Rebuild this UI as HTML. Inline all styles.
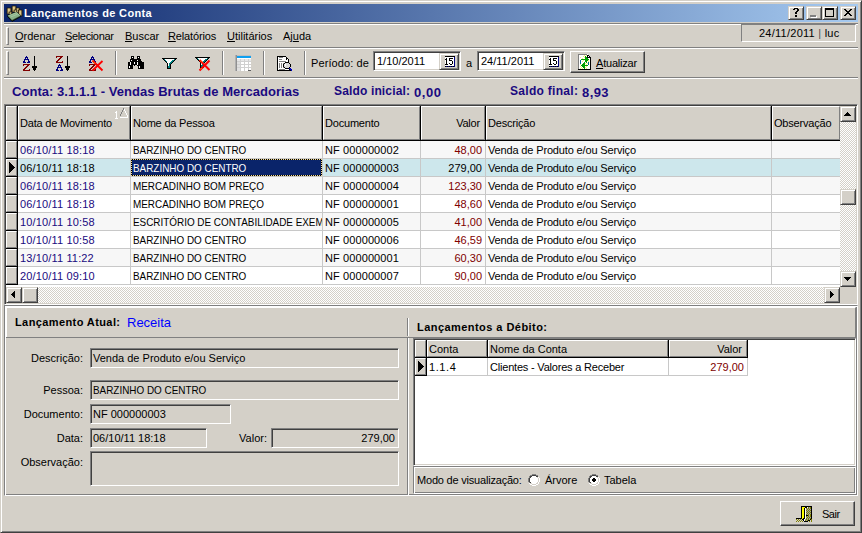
<!DOCTYPE html>
<html><head><meta charset="utf-8"><style>
html,body{margin:0;padding:0;}
body{width:862px;height:533px;position:relative;overflow:hidden;background:#d4d0c8;font-family:'Liberation Sans',sans-serif;font-size:11px;}
.t{position:absolute;white-space:nowrap;line-height:13px;font-size:11px;font-family:'Liberation Sans',sans-serif;}
u{text-decoration:underline;text-underline-offset:1px;}
</style></head><body>
<div style="position:absolute;left:0px;top:0px;width:862px;height:533px;box-sizing:border-box;background:#d4d0c8;border:1px solid;border-color:#d4d0c8 #404040 #404040 #d4d0c8;box-shadow:inset 1px 1px #ffffff,inset -1px -1px #808080;"></div>
<div style="position:absolute;left:4px;top:4px;width:854px;height:18px;background:linear-gradient(to right,#0a246a,#a6caf0);"></div>
<svg style="position:absolute;left:6px;top:5px" width="17" height="17" viewBox="0 0 17 17">
<defs><linearGradient id="cg" x1="0" x2="1"><stop offset="0" stop-color="#8a7040"/><stop offset="0.45" stop-color="#f0dc98"/><stop offset="1" stop-color="#9a8048"/></linearGradient></defs>
<g stroke="#1a1408" stroke-width="0.7">
<rect x="1" y="3" width="4" height="6" fill="url(#cg)"/>
<rect x="6" y="1" width="4" height="6" fill="url(#cg)"/>
<rect x="10" y="3" width="3.5" height="5" fill="url(#cg)"/>
<rect x="12.5" y="5" width="3.5" height="6" fill="url(#cg)"/>
<rect x="3" y="7" width="3" height="2.5" fill="url(#cg)"/>
<rect x="8" y="5" width="3" height="2.5" fill="url(#cg)"/>
</g>
<path d="M1.6 10.4 L10.4 7 L14.7 10.4 L14.7 11.6 L6 16.4 L1.6 11.6 Z" fill="#304830" stroke="#000" stroke-width="0.8" stroke-linejoin="round"/>
<path d="M1.6 10.4 L10.4 7 L14.7 10.4 L6 15 Z" fill="#88b088"/>
<path d="M3.2 10.6 L10.4 7.9 L13.3 10.3 M4.6 12 L11.2 9.3" fill="none" stroke="#b0d0a8" stroke-width="0.7"/>
</svg>
<div class="t" style="left:24px;top:7px;color:#fff;font-weight:bold;letter-spacing:0.35px;">Lançamentos de Conta</div>
<div style="position:absolute;left:788px;top:6px;width:16px;height:14px;box-sizing:border-box;background:#d4d0c8;border:1px solid;border-color:#d4d0c8 #404040 #404040 #d4d0c8;box-shadow:inset 1px 1px #ffffff,inset -1px -1px #808080;"></div>
<svg style="position:absolute;left:793px;top:8px" width="6" height="9" viewBox="0 0 6 9" shape-rendering="crispEdges"><rect x="1" y="0" width="4" height="1" fill="#000"/><rect x="0" y="1" width="2" height="1" fill="#000"/><rect x="4" y="1" width="2" height="1" fill="#000"/><rect x="4" y="2" width="2" height="1" fill="#000"/><rect x="3" y="3" width="2" height="1" fill="#000"/><rect x="2" y="4" width="2" height="1" fill="#000"/><rect x="2" y="5" width="2" height="1" fill="#000"/><rect x="2" y="7" width="2" height="1" fill="#000"/><rect x="2" y="8" width="2" height="1" fill="#000"/></svg>
<div style="position:absolute;left:806px;top:6px;width:16px;height:14px;box-sizing:border-box;background:#d4d0c8;border:1px solid;border-color:#d4d0c8 #404040 #404040 #d4d0c8;box-shadow:inset 1px 1px #ffffff,inset -1px -1px #808080;"></div>
<svg style="position:absolute;left:810px;top:15px" width="7" height="3" viewBox="0 0 7 3" shape-rendering="crispEdges"><rect x="0" y="0" width="6" height="1" fill="#808080"/><rect x="0" y="1" width="6" height="1" fill="#808080"/><rect x="6" y="1" width="1" height="1" fill="#fff"/><rect x="1" y="2" width="6" height="1" fill="#fff"/></svg>
<div style="position:absolute;left:822px;top:6px;width:16px;height:14px;box-sizing:border-box;background:#d4d0c8;border:1px solid;border-color:#d4d0c8 #404040 #404040 #d4d0c8;box-shadow:inset 1px 1px #ffffff,inset -1px -1px #808080;"></div>
<svg style="position:absolute;left:825px;top:8px" width="9" height="9" viewBox="0 0 9 9" shape-rendering="crispEdges"><rect x="0" y="0" width="9" height="1" fill="#000"/><rect x="0" y="1" width="9" height="1" fill="#000"/><rect x="0" y="2" width="1" height="1" fill="#000"/><rect x="8" y="2" width="1" height="1" fill="#000"/><rect x="0" y="3" width="1" height="1" fill="#000"/><rect x="8" y="3" width="1" height="1" fill="#000"/><rect x="0" y="4" width="1" height="1" fill="#000"/><rect x="8" y="4" width="1" height="1" fill="#000"/><rect x="0" y="5" width="1" height="1" fill="#000"/><rect x="8" y="5" width="1" height="1" fill="#000"/><rect x="0" y="6" width="1" height="1" fill="#000"/><rect x="8" y="6" width="1" height="1" fill="#000"/><rect x="0" y="7" width="1" height="1" fill="#000"/><rect x="8" y="7" width="1" height="1" fill="#000"/><rect x="0" y="8" width="9" height="1" fill="#000"/></svg>
<div style="position:absolute;left:840px;top:6px;width:16px;height:14px;box-sizing:border-box;background:#d4d0c8;border:1px solid;border-color:#d4d0c8 #404040 #404040 #d4d0c8;box-shadow:inset 1px 1px #ffffff,inset -1px -1px #808080;"></div>
<svg style="position:absolute;left:844px;top:9px" width="8" height="7" viewBox="0 0 8 7" shape-rendering="crispEdges"><rect x="0" y="0" width="2" height="1" fill="#000"/><rect x="6" y="0" width="2" height="1" fill="#000"/><rect x="1" y="1" width="2" height="1" fill="#000"/><rect x="5" y="1" width="2" height="1" fill="#000"/><rect x="2" y="2" width="4" height="1" fill="#000"/><rect x="3" y="3" width="2" height="1" fill="#000"/><rect x="2" y="4" width="4" height="1" fill="#000"/><rect x="1" y="5" width="2" height="1" fill="#000"/><rect x="5" y="5" width="2" height="1" fill="#000"/><rect x="0" y="6" width="2" height="1" fill="#000"/><rect x="6" y="6" width="2" height="1" fill="#000"/></svg>
<div style="position:absolute;left:4px;top:23px;width:854px;height:1px;background:#808080"></div>
<div style="position:absolute;left:4px;top:24px;width:854px;height:1px;background:#ffffff"></div>
<div style="position:absolute;left:6px;top:27px;width:3px;height:18px;box-sizing:border-box;border:1px solid;border-color:#ffffff #808080 #808080 #ffffff;"></div>
<div class="t" style="left:15px;top:30px;color:#000;"><u>O</u>rdenar</div>
<div class="t" style="left:65px;top:30px;color:#000;letter-spacing:-0.35px;"><u>S</u>elecionar</div>
<div class="t" style="left:125px;top:30px;color:#000;"><u>B</u>uscar</div>
<div class="t" style="left:168px;top:30px;color:#000;letter-spacing:-0.15px;"><u>R</u>elatórios</div>
<div class="t" style="left:227px;top:30px;color:#000;"><u>U</u>tilitários</div>
<div class="t" style="left:283px;top:30px;color:#000;">Aj<u>u</u>da</div>
<div style="position:absolute;left:741px;top:24px;width:115px;height:18px;box-sizing:border-box;background:#d4d0c8;border:1px solid;border-color:#808080 #ffffff #ffffff #808080;"></div>
<div class="t" style="left:759px;top:27px;color:#000;letter-spacing:0.25px;">24/11/2011 <span style="color:#505050">|</span> luc</div>
<div style="position:absolute;left:4px;top:47px;width:854px;height:1px;background:#808080"></div>
<div style="position:absolute;left:4px;top:48px;width:854px;height:1px;background:#ffffff"></div>
<div style="position:absolute;left:6px;top:51px;width:3px;height:24px;box-sizing:border-box;border:1px solid;border-color:#ffffff #808080 #808080 #ffffff;"></div>
<div style="position:absolute;left:4px;top:77px;width:854px;height:1px;background:#808080"></div>
<div style="position:absolute;left:4px;top:78px;width:854px;height:1px;background:#ffffff"></div>
<div style="position:absolute;left:115px;top:51px;width:1px;height:24px;background:#808080"></div>
<div style="position:absolute;left:116px;top:51px;width:1px;height:24px;background:#ffffff"></div>
<div style="position:absolute;left:222px;top:51px;width:1px;height:24px;background:#808080"></div>
<div style="position:absolute;left:223px;top:51px;width:1px;height:24px;background:#ffffff"></div>
<div style="position:absolute;left:263px;top:51px;width:1px;height:24px;background:#808080"></div>
<div style="position:absolute;left:264px;top:51px;width:1px;height:24px;background:#ffffff"></div>
<div style="position:absolute;left:304px;top:51px;width:1px;height:24px;background:#808080"></div>
<div style="position:absolute;left:305px;top:51px;width:1px;height:24px;background:#ffffff"></div>
<svg style="position:absolute;left:23px;top:56px" width="14" height="15" viewBox="0 0 14 15" shape-rendering="crispEdges"><rect x="3" y="0" width="1" height="1" fill="#000080"/><rect x="11" y="0" width="1" height="1" fill="#000"/><rect x="2" y="1" width="3" height="1" fill="#000080"/><rect x="11" y="1" width="1" height="1" fill="#000"/><rect x="2" y="2" width="1" height="1" fill="#000080"/><rect x="4" y="2" width="1" height="1" fill="#000080"/><rect x="11" y="2" width="1" height="1" fill="#000"/><rect x="1" y="3" width="5" height="1" fill="#000080"/><rect x="11" y="3" width="1" height="1" fill="#000"/><rect x="1" y="4" width="1" height="1" fill="#000080"/><rect x="5" y="4" width="1" height="1" fill="#000080"/><rect x="11" y="4" width="1" height="1" fill="#000"/><rect x="0" y="5" width="2" height="1" fill="#000080"/><rect x="5" y="5" width="2" height="1" fill="#000080"/><rect x="11" y="5" width="1" height="1" fill="#000"/><rect x="0" y="6" width="3" height="1" fill="#000080"/><rect x="4" y="6" width="3" height="1" fill="#000080"/><rect x="11" y="6" width="1" height="1" fill="#000"/><rect x="11" y="7" width="1" height="1" fill="#000"/><rect x="0" y="8" width="7" height="1" fill="#800000"/><rect x="11" y="8" width="1" height="1" fill="#000"/><rect x="0" y="9" width="1" height="1" fill="#800000"/><rect x="4" y="9" width="2" height="1" fill="#800000"/><rect x="11" y="9" width="1" height="1" fill="#000"/><rect x="3" y="10" width="2" height="1" fill="#800000"/><rect x="9" y="10" width="5" height="1" fill="#000"/><rect x="2" y="11" width="2" height="1" fill="#800000"/><rect x="9" y="11" width="5" height="1" fill="#000"/><rect x="1" y="12" width="2" height="1" fill="#800000"/><rect x="10" y="12" width="3" height="1" fill="#000"/><rect x="0" y="13" width="2" height="1" fill="#800000"/><rect x="6" y="13" width="1" height="1" fill="#800000"/><rect x="10" y="13" width="3" height="1" fill="#000"/><rect x="0" y="14" width="7" height="1" fill="#800000"/><rect x="11" y="14" width="1" height="1" fill="#000"/></svg>
<svg style="position:absolute;left:56px;top:56px" width="14" height="15" viewBox="0 0 14 15" shape-rendering="crispEdges"><rect x="0" y="0" width="7" height="1" fill="#800000"/><rect x="11" y="0" width="1" height="1" fill="#000"/><rect x="0" y="1" width="1" height="1" fill="#800000"/><rect x="4" y="1" width="2" height="1" fill="#800000"/><rect x="11" y="1" width="1" height="1" fill="#000"/><rect x="3" y="2" width="2" height="1" fill="#800000"/><rect x="11" y="2" width="1" height="1" fill="#000"/><rect x="2" y="3" width="2" height="1" fill="#800000"/><rect x="11" y="3" width="1" height="1" fill="#000"/><rect x="1" y="4" width="2" height="1" fill="#800000"/><rect x="11" y="4" width="1" height="1" fill="#000"/><rect x="0" y="5" width="2" height="1" fill="#800000"/><rect x="6" y="5" width="1" height="1" fill="#800000"/><rect x="11" y="5" width="1" height="1" fill="#000"/><rect x="0" y="6" width="7" height="1" fill="#800000"/><rect x="11" y="6" width="1" height="1" fill="#000"/><rect x="11" y="7" width="1" height="1" fill="#000"/><rect x="3" y="8" width="1" height="1" fill="#000080"/><rect x="11" y="8" width="1" height="1" fill="#000"/><rect x="2" y="9" width="3" height="1" fill="#000080"/><rect x="11" y="9" width="1" height="1" fill="#000"/><rect x="2" y="10" width="1" height="1" fill="#000080"/><rect x="4" y="10" width="1" height="1" fill="#000080"/><rect x="9" y="10" width="5" height="1" fill="#000"/><rect x="1" y="11" width="5" height="1" fill="#000080"/><rect x="9" y="11" width="5" height="1" fill="#000"/><rect x="1" y="12" width="1" height="1" fill="#000080"/><rect x="5" y="12" width="1" height="1" fill="#000080"/><rect x="10" y="12" width="3" height="1" fill="#000"/><rect x="0" y="13" width="2" height="1" fill="#000080"/><rect x="5" y="13" width="2" height="1" fill="#000080"/><rect x="10" y="13" width="3" height="1" fill="#000"/><rect x="0" y="14" width="3" height="1" fill="#000080"/><rect x="4" y="14" width="3" height="1" fill="#000080"/><rect x="11" y="14" width="1" height="1" fill="#000"/></svg>
<svg style="position:absolute;left:89px;top:56px" width="14" height="15" viewBox="0 0 14 15" shape-rendering="crispEdges"><rect x="3" y="0" width="1" height="1" fill="#000080"/><rect x="2" y="1" width="3" height="1" fill="#000080"/><rect x="2" y="2" width="1" height="1" fill="#000080"/><rect x="4" y="2" width="1" height="1" fill="#000080"/><rect x="1" y="3" width="5" height="1" fill="#000080"/><rect x="1" y="4" width="1" height="1" fill="#000080"/><rect x="5" y="4" width="1" height="1" fill="#000080"/><rect x="0" y="5" width="2" height="1" fill="#000080"/><rect x="5" y="5" width="2" height="1" fill="#000080"/><rect x="0" y="6" width="3" height="1" fill="#000080"/><rect x="4" y="6" width="3" height="1" fill="#000080"/><rect x="0" y="8" width="7" height="1" fill="#800000"/><rect x="0" y="9" width="1" height="1" fill="#800000"/><rect x="4" y="9" width="2" height="1" fill="#800000"/><rect x="3" y="10" width="2" height="1" fill="#800000"/><rect x="2" y="11" width="2" height="1" fill="#800000"/><rect x="1" y="12" width="2" height="1" fill="#800000"/><rect x="0" y="13" width="2" height="1" fill="#800000"/><rect x="6" y="13" width="1" height="1" fill="#800000"/><rect x="0" y="14" width="7" height="1" fill="#800000"/></svg>
<svg style="position:absolute;left:86px;top:54px" width="20" height="20" viewBox="0 0 20 20"><path d="M6.5 6.5 L16.5 16.5 M16.5 7 L6.5 16.5" stroke="#ff0000" stroke-width="1.8"/><path d="M7 7.5 L9 9.5" stroke="#ff9000" stroke-width="1"/></svg>
<svg style="position:absolute;left:128px;top:56px" width="16" height="13" viewBox="0 0 16 13" shape-rendering="crispEdges"><rect x="3" y="0" width="3" height="1" fill="#000"/><rect x="9" y="0" width="3" height="1" fill="#000"/><rect x="3" y="1" width="1" height="1" fill="#000"/><rect x="4" y="1" width="1" height="1" fill="#fff"/><rect x="5" y="1" width="1" height="1" fill="#000"/><rect x="9" y="1" width="1" height="1" fill="#000"/><rect x="10" y="1" width="1" height="1" fill="#fff"/><rect x="11" y="1" width="1" height="1" fill="#000"/><rect x="3" y="2" width="3" height="1" fill="#000"/><rect x="9" y="2" width="3" height="1" fill="#000"/><rect x="2" y="3" width="11" height="1" fill="#000"/><rect x="2" y="4" width="1" height="1" fill="#000"/><rect x="3" y="4" width="1" height="1" fill="#fff"/><rect x="4" y="4" width="5" height="1" fill="#000"/><rect x="9" y="4" width="1" height="1" fill="#fff"/><rect x="10" y="4" width="3" height="1" fill="#000"/><rect x="2" y="5" width="12" height="1" fill="#000"/><rect x="0" y="6" width="2" height="1" fill="#000"/><rect x="2" y="6" width="1" height="1" fill="#fff"/><rect x="3" y="6" width="3" height="1" fill="#000"/><rect x="6" y="6" width="1" height="1" fill="#fff"/><rect x="7" y="6" width="2" height="1" fill="#000"/><rect x="9" y="6" width="1" height="1" fill="#fff"/><rect x="10" y="6" width="6" height="1" fill="#000"/><rect x="0" y="7" width="2" height="1" fill="#000"/><rect x="2" y="7" width="1" height="1" fill="#fff"/><rect x="3" y="7" width="3" height="1" fill="#000"/><rect x="6" y="7" width="1" height="1" fill="#fff"/><rect x="7" y="7" width="2" height="1" fill="#000"/><rect x="9" y="7" width="1" height="1" fill="#fff"/><rect x="10" y="7" width="6" height="1" fill="#000"/><rect x="0" y="8" width="2" height="1" fill="#000"/><rect x="2" y="8" width="1" height="1" fill="#fff"/><rect x="3" y="8" width="6" height="1" fill="#000"/><rect x="9" y="8" width="1" height="1" fill="#fff"/><rect x="10" y="8" width="6" height="1" fill="#000"/><rect x="0" y="9" width="5" height="1" fill="#000"/><rect x="6" y="9" width="1" height="1" fill="#000"/><rect x="9" y="9" width="7" height="1" fill="#000"/><rect x="0" y="10" width="1" height="1" fill="#000"/><rect x="1" y="10" width="1" height="1" fill="#fff"/><rect x="2" y="10" width="3" height="1" fill="#000"/><rect x="10" y="10" width="1" height="1" fill="#000"/><rect x="11" y="10" width="1" height="1" fill="#fff"/><rect x="12" y="10" width="4" height="1" fill="#000"/><rect x="0" y="11" width="1" height="1" fill="#000"/><rect x="1" y="11" width="1" height="1" fill="#fff"/><rect x="2" y="11" width="3" height="1" fill="#000"/><rect x="10" y="11" width="1" height="1" fill="#000"/><rect x="11" y="11" width="1" height="1" fill="#fff"/><rect x="12" y="11" width="4" height="1" fill="#000"/><rect x="0" y="12" width="5" height="1" fill="#000"/><rect x="10" y="12" width="6" height="1" fill="#000"/></svg>
<svg style="position:absolute;left:162px;top:58px" width="15" height="11" viewBox="0 0 15 11" shape-rendering="crispEdges"><rect x="0" y="0" width="15" height="1" fill="#000"/><rect x="1" y="1" width="1" height="1" fill="#000"/><rect x="2" y="1" width="1" height="1" fill="#008080"/><rect x="3" y="1" width="9" height="1" fill="#fff"/><rect x="12" y="1" width="1" height="1" fill="#008080"/><rect x="13" y="1" width="1" height="1" fill="#000"/><rect x="2" y="2" width="1" height="1" fill="#000"/><rect x="3" y="2" width="1" height="1" fill="#008080"/><rect x="4" y="2" width="6" height="1" fill="#fff"/><rect x="10" y="2" width="2" height="1" fill="#008080"/><rect x="12" y="2" width="1" height="1" fill="#000"/><rect x="3" y="3" width="1" height="1" fill="#000"/><rect x="4" y="3" width="1" height="1" fill="#008080"/><rect x="5" y="3" width="4" height="1" fill="#fff"/><rect x="9" y="3" width="2" height="1" fill="#008080"/><rect x="11" y="3" width="1" height="1" fill="#000"/><rect x="4" y="4" width="1" height="1" fill="#000"/><rect x="5" y="4" width="3" height="1" fill="#fff"/><rect x="8" y="4" width="2" height="1" fill="#008080"/><rect x="10" y="4" width="1" height="1" fill="#000"/><rect x="5" y="5" width="1" height="1" fill="#000"/><rect x="6" y="5" width="1" height="1" fill="#fff"/><rect x="7" y="5" width="2" height="1" fill="#008080"/><rect x="9" y="5" width="1" height="1" fill="#000"/><rect x="5" y="6" width="1" height="1" fill="#000"/><rect x="6" y="6" width="1" height="1" fill="#fff"/><rect x="7" y="6" width="1" height="1" fill="#008080"/><rect x="8" y="6" width="1" height="1" fill="#000"/><rect x="5" y="7" width="1" height="1" fill="#000"/><rect x="6" y="7" width="1" height="1" fill="#fff"/><rect x="7" y="7" width="1" height="1" fill="#008080"/><rect x="8" y="7" width="1" height="1" fill="#000"/><rect x="5" y="8" width="1" height="1" fill="#000"/><rect x="6" y="8" width="2" height="1" fill="#008080"/><rect x="8" y="8" width="1" height="1" fill="#000"/><rect x="5" y="9" width="1" height="1" fill="#000"/><rect x="6" y="9" width="2" height="1" fill="#008080"/><rect x="8" y="9" width="1" height="1" fill="#000"/><rect x="5" y="10" width="4" height="1" fill="#000"/></svg>
<svg style="position:absolute;left:195px;top:57px" width="15" height="11" viewBox="0 0 15 11" shape-rendering="crispEdges"><rect x="0" y="0" width="15" height="1" fill="#000"/><rect x="1" y="1" width="1" height="1" fill="#000"/><rect x="2" y="1" width="1" height="1" fill="#008080"/><rect x="3" y="1" width="9" height="1" fill="#fff"/><rect x="12" y="1" width="1" height="1" fill="#008080"/><rect x="13" y="1" width="1" height="1" fill="#000"/><rect x="2" y="2" width="1" height="1" fill="#000"/><rect x="3" y="2" width="1" height="1" fill="#008080"/><rect x="4" y="2" width="6" height="1" fill="#fff"/><rect x="10" y="2" width="2" height="1" fill="#008080"/><rect x="12" y="2" width="1" height="1" fill="#000"/><rect x="3" y="3" width="1" height="1" fill="#000"/><rect x="4" y="3" width="1" height="1" fill="#008080"/><rect x="5" y="3" width="4" height="1" fill="#fff"/><rect x="9" y="3" width="2" height="1" fill="#008080"/><rect x="11" y="3" width="1" height="1" fill="#000"/><rect x="4" y="4" width="1" height="1" fill="#000"/><rect x="5" y="4" width="3" height="1" fill="#fff"/><rect x="8" y="4" width="2" height="1" fill="#008080"/><rect x="10" y="4" width="1" height="1" fill="#000"/><rect x="5" y="5" width="1" height="1" fill="#000"/><rect x="6" y="5" width="1" height="1" fill="#fff"/><rect x="7" y="5" width="2" height="1" fill="#008080"/><rect x="9" y="5" width="1" height="1" fill="#000"/><rect x="5" y="6" width="1" height="1" fill="#000"/><rect x="6" y="6" width="1" height="1" fill="#fff"/><rect x="7" y="6" width="1" height="1" fill="#008080"/><rect x="8" y="6" width="1" height="1" fill="#000"/><rect x="5" y="7" width="1" height="1" fill="#000"/><rect x="6" y="7" width="1" height="1" fill="#fff"/><rect x="7" y="7" width="1" height="1" fill="#008080"/><rect x="8" y="7" width="1" height="1" fill="#000"/><rect x="5" y="8" width="1" height="1" fill="#000"/><rect x="6" y="8" width="2" height="1" fill="#008080"/><rect x="8" y="8" width="1" height="1" fill="#000"/><rect x="5" y="9" width="1" height="1" fill="#000"/><rect x="6" y="9" width="2" height="1" fill="#008080"/><rect x="8" y="9" width="1" height="1" fill="#000"/><rect x="5" y="10" width="4" height="1" fill="#000"/></svg>
<svg style="position:absolute;left:195px;top:55px" width="18" height="18" viewBox="0 0 18 18"><path d="M4.5 5 L14.5 15 M14.5 5.5 L4.5 15.5" stroke="#ff0000" stroke-width="2"/><path d="M5 5.5 L7 7.5 M5.5 14.5 L7 13" stroke="#ff9000" stroke-width="0.8"/></svg>
<svg style="position:absolute;left:235px;top:55px" width="16" height="16" viewBox="0 0 16 16" shape-rendering="crispEdges"><rect x="0" y="0" width="16" height="16" fill="#fff"/><rect x="0" y="0" width="2" height="16" fill="#909090"/><rect x="0" y="0" width="1" height="16" fill="#b0b0b0"/><rect x="2" y="0" width="14" height="1" fill="#c0c0c0"/><rect x="2" y="1" width="14" height="2" fill="#10a0f0"/><rect x="2" y="4" width="14" height="2" fill="#e8e8e8"/><rect x="2" y="6" width="3" height="10" fill="#e0e0e0"/><path d="M2 6.5H16M2 9.5H16M2 12.5H16M5.5 4V16M9.5 4V16M13.5 4V16" stroke="#d0d0d0" stroke-width="1"/><rect x="13" y="15" width="3" height="1" fill="#606060"/></svg>
<svg style="position:absolute;left:277px;top:56px" width="16" height="15" viewBox="0 0 16 15" shape-rendering="crispEdges"><rect x="0" y="0" width="9" height="1" fill="#000"/><rect x="0" y="1" width="1" height="1" fill="#000"/><rect x="1" y="1" width="1" height="1" fill="#fff"/><rect x="2" y="1" width="4" height="1" fill="#808080"/><rect x="6" y="1" width="3" height="1" fill="#fff"/><rect x="9" y="1" width="1" height="1" fill="#000"/><rect x="0" y="2" width="1" height="1" fill="#000"/><rect x="1" y="2" width="8" height="1" fill="#fff"/><rect x="9" y="2" width="2" height="1" fill="#000"/><rect x="0" y="3" width="1" height="1" fill="#000"/><rect x="1" y="3" width="1" height="1" fill="#fff"/><rect x="2" y="3" width="3" height="1" fill="#808080"/><rect x="5" y="3" width="4" height="1" fill="#fff"/><rect x="9" y="3" width="1" height="1" fill="#000"/><rect x="10" y="3" width="1" height="1" fill="#fff"/><rect x="11" y="3" width="1" height="1" fill="#000"/><rect x="0" y="4" width="1" height="1" fill="#000"/><rect x="1" y="4" width="10" height="1" fill="#fff"/><rect x="11" y="4" width="1" height="1" fill="#000"/><rect x="0" y="5" width="1" height="1" fill="#000"/><rect x="1" y="5" width="1" height="1" fill="#fff"/><rect x="2" y="5" width="7" height="1" fill="#808080"/><rect x="9" y="5" width="2" height="1" fill="#fff"/><rect x="11" y="5" width="1" height="1" fill="#000"/><rect x="0" y="6" width="1" height="1" fill="#000"/><rect x="1" y="6" width="7" height="1" fill="#fff"/><rect x="8" y="6" width="4" height="1" fill="#000"/><rect x="0" y="7" width="1" height="1" fill="#000"/><rect x="1" y="7" width="1" height="1" fill="#fff"/><rect x="2" y="7" width="1" height="1" fill="#808080"/><rect x="3" y="7" width="1" height="1" fill="#fff"/><rect x="4" y="7" width="1" height="1" fill="#808080"/><rect x="5" y="7" width="1" height="1" fill="#fff"/><rect x="6" y="7" width="1" height="1" fill="#808080"/><rect x="7" y="7" width="1" height="1" fill="#000"/><rect x="8" y="7" width="4" height="1" fill="#d8d8d8"/><rect x="12" y="7" width="1" height="1" fill="#000"/><rect x="0" y="8" width="1" height="1" fill="#000"/><rect x="1" y="8" width="1" height="1" fill="#fff"/><rect x="2" y="8" width="1" height="1" fill="#808080"/><rect x="3" y="8" width="1" height="1" fill="#fff"/><rect x="4" y="8" width="1" height="1" fill="#808080"/><rect x="5" y="8" width="1" height="1" fill="#fff"/><rect x="6" y="8" width="1" height="1" fill="#000"/><rect x="7" y="8" width="1" height="1" fill="#d8d8d8"/><rect x="8" y="8" width="1" height="1" fill="#fff"/><rect x="9" y="8" width="4" height="1" fill="#d8d8d8"/><rect x="13" y="8" width="1" height="1" fill="#000"/><rect x="0" y="9" width="1" height="1" fill="#000"/><rect x="1" y="9" width="1" height="1" fill="#fff"/><rect x="2" y="9" width="1" height="1" fill="#808080"/><rect x="3" y="9" width="1" height="1" fill="#fff"/><rect x="4" y="9" width="1" height="1" fill="#808080"/><rect x="5" y="9" width="1" height="1" fill="#fff"/><rect x="6" y="9" width="1" height="1" fill="#000"/><rect x="7" y="9" width="1" height="1" fill="#d8d8d8"/><rect x="8" y="9" width="1" height="1" fill="#fff"/><rect x="9" y="9" width="4" height="1" fill="#d8d8d8"/><rect x="13" y="9" width="1" height="1" fill="#000"/><rect x="0" y="10" width="1" height="1" fill="#000"/><rect x="1" y="10" width="1" height="1" fill="#fff"/><rect x="2" y="10" width="1" height="1" fill="#808080"/><rect x="3" y="10" width="1" height="1" fill="#fff"/><rect x="4" y="10" width="1" height="1" fill="#808080"/><rect x="5" y="10" width="1" height="1" fill="#fff"/><rect x="6" y="10" width="1" height="1" fill="#000"/><rect x="7" y="10" width="6" height="1" fill="#d8d8d8"/><rect x="13" y="10" width="1" height="1" fill="#000"/><rect x="0" y="11" width="1" height="1" fill="#000"/><rect x="1" y="11" width="1" height="1" fill="#fff"/><rect x="2" y="11" width="1" height="1" fill="#808080"/><rect x="3" y="11" width="1" height="1" fill="#fff"/><rect x="4" y="11" width="1" height="1" fill="#808080"/><rect x="5" y="11" width="1" height="1" fill="#fff"/><rect x="6" y="11" width="1" height="1" fill="#808080"/><rect x="7" y="11" width="1" height="1" fill="#000"/><rect x="8" y="11" width="4" height="1" fill="#d8d8d8"/><rect x="12" y="11" width="1" height="1" fill="#000"/><rect x="0" y="12" width="1" height="1" fill="#000"/><rect x="1" y="12" width="7" height="1" fill="#fff"/><rect x="8" y="12" width="4" height="1" fill="#000"/><rect x="12" y="12" width="2" height="1" fill="#0000c0"/><rect x="0" y="13" width="1" height="1" fill="#000"/><rect x="1" y="13" width="1" height="1" fill="#fff"/><rect x="2" y="13" width="6" height="1" fill="#808080"/><rect x="8" y="13" width="4" height="1" fill="#fff"/><rect x="12" y="13" width="1" height="1" fill="#000"/><rect x="13" y="13" width="2" height="1" fill="#0000c0"/><rect x="0" y="14" width="14" height="1" fill="#000"/><rect x="14" y="14" width="1" height="1" fill="#0000c0"/></svg>
<div class="t" style="left:311px;top:57px;color:#000;letter-spacing:0.1px;">Período: de</div>
<div style="position:absolute;left:373px;top:51px;width:88px;height:20px;box-sizing:border-box;background:#ffffff;border:1px solid;border-color:#808080 #ffffff #ffffff #808080;box-shadow:inset 1px 1px #404040,inset -1px -1px #d4d0c8;"></div>
<div class="t" style="left:377px;top:55px;color:#000;">1/10/2011</div>
<div style="position:absolute;left:439px;top:53px;width:20px;height:17px;box-sizing:border-box;background:#d4d0c8;border:1px solid;border-color:#d4d0c8 #404040 #404040 #d4d0c8;box-shadow:inset 1px 1px #ffffff,inset -1px -1px #808080;"></div>
<svg style="position:absolute;left:445px;top:56px" width="11" height="11" viewBox="0 0 11 11" shape-rendering="crispEdges"><rect x="0" y="0" width="10" height="1" fill="#000"/><rect x="0" y="1" width="9" height="1" fill="#fff"/><rect x="9" y="1" width="1" height="1" fill="#000080"/><rect x="0" y="2" width="1" height="1" fill="#fff"/><rect x="1" y="2" width="1" height="1" fill="#000"/><rect x="2" y="2" width="2" height="1" fill="#fff"/><rect x="4" y="2" width="4" height="1" fill="#000"/><rect x="8" y="2" width="1" height="1" fill="#fff"/><rect x="9" y="2" width="1" height="1" fill="#000080"/><rect x="0" y="3" width="2" height="1" fill="#000"/><rect x="2" y="3" width="2" height="1" fill="#fff"/><rect x="4" y="3" width="1" height="1" fill="#000"/><rect x="5" y="3" width="4" height="1" fill="#fff"/><rect x="9" y="3" width="1" height="1" fill="#000080"/><rect x="0" y="4" width="1" height="1" fill="#fff"/><rect x="1" y="4" width="1" height="1" fill="#000"/><rect x="2" y="4" width="2" height="1" fill="#fff"/><rect x="4" y="4" width="3" height="1" fill="#000"/><rect x="7" y="4" width="2" height="1" fill="#fff"/><rect x="9" y="4" width="1" height="1" fill="#000080"/><rect x="0" y="5" width="1" height="1" fill="#fff"/><rect x="1" y="5" width="1" height="1" fill="#000"/><rect x="2" y="5" width="5" height="1" fill="#fff"/><rect x="7" y="5" width="1" height="1" fill="#000"/><rect x="8" y="5" width="1" height="1" fill="#fff"/><rect x="9" y="5" width="1" height="1" fill="#000080"/><rect x="0" y="6" width="1" height="1" fill="#fff"/><rect x="1" y="6" width="1" height="1" fill="#000"/><rect x="2" y="6" width="5" height="1" fill="#fff"/><rect x="7" y="6" width="1" height="1" fill="#000"/><rect x="8" y="6" width="1" height="1" fill="#fff"/><rect x="9" y="6" width="1" height="1" fill="#000080"/><rect x="0" y="7" width="1" height="1" fill="#fff"/><rect x="1" y="7" width="1" height="1" fill="#000"/><rect x="2" y="7" width="2" height="1" fill="#fff"/><rect x="4" y="7" width="1" height="1" fill="#000"/><rect x="5" y="7" width="2" height="1" fill="#fff"/><rect x="7" y="7" width="1" height="1" fill="#000"/><rect x="8" y="7" width="1" height="1" fill="#fff"/><rect x="9" y="7" width="1" height="1" fill="#000080"/><rect x="0" y="8" width="3" height="1" fill="#000"/><rect x="3" y="8" width="2" height="1" fill="#fff"/><rect x="5" y="8" width="2" height="1" fill="#000"/><rect x="7" y="8" width="2" height="1" fill="#fff"/><rect x="9" y="8" width="1" height="1" fill="#000080"/><rect x="0" y="9" width="9" height="1" fill="#fff"/><rect x="9" y="9" width="1" height="1" fill="#000080"/><rect x="0" y="10" width="1" height="1" fill="#000"/><rect x="1" y="10" width="1" height="1" fill="#000080"/><rect x="2" y="10" width="1" height="1" fill="#000"/><rect x="3" y="10" width="1" height="1" fill="#000080"/><rect x="4" y="10" width="1" height="1" fill="#000"/><rect x="5" y="10" width="1" height="1" fill="#000080"/><rect x="6" y="10" width="1" height="1" fill="#000"/><rect x="7" y="10" width="1" height="1" fill="#000080"/><rect x="8" y="10" width="1" height="1" fill="#000"/><rect x="9" y="10" width="1" height="1" fill="#000080"/></svg>
<div class="t" style="left:466px;top:57px;color:#000;">a</div>
<div style="position:absolute;left:477px;top:51px;width:88px;height:20px;box-sizing:border-box;background:#ffffff;border:1px solid;border-color:#808080 #ffffff #ffffff #808080;box-shadow:inset 1px 1px #404040,inset -1px -1px #d4d0c8;"></div>
<div class="t" style="left:481px;top:55px;color:#000;">24/11/2011</div>
<div style="position:absolute;left:543px;top:53px;width:20px;height:17px;box-sizing:border-box;background:#d4d0c8;border:1px solid;border-color:#d4d0c8 #404040 #404040 #d4d0c8;box-shadow:inset 1px 1px #ffffff,inset -1px -1px #808080;"></div>
<svg style="position:absolute;left:549px;top:56px" width="11" height="11" viewBox="0 0 11 11" shape-rendering="crispEdges"><rect x="0" y="0" width="10" height="1" fill="#000"/><rect x="0" y="1" width="9" height="1" fill="#fff"/><rect x="9" y="1" width="1" height="1" fill="#000080"/><rect x="0" y="2" width="1" height="1" fill="#fff"/><rect x="1" y="2" width="1" height="1" fill="#000"/><rect x="2" y="2" width="2" height="1" fill="#fff"/><rect x="4" y="2" width="4" height="1" fill="#000"/><rect x="8" y="2" width="1" height="1" fill="#fff"/><rect x="9" y="2" width="1" height="1" fill="#000080"/><rect x="0" y="3" width="2" height="1" fill="#000"/><rect x="2" y="3" width="2" height="1" fill="#fff"/><rect x="4" y="3" width="1" height="1" fill="#000"/><rect x="5" y="3" width="4" height="1" fill="#fff"/><rect x="9" y="3" width="1" height="1" fill="#000080"/><rect x="0" y="4" width="1" height="1" fill="#fff"/><rect x="1" y="4" width="1" height="1" fill="#000"/><rect x="2" y="4" width="2" height="1" fill="#fff"/><rect x="4" y="4" width="3" height="1" fill="#000"/><rect x="7" y="4" width="2" height="1" fill="#fff"/><rect x="9" y="4" width="1" height="1" fill="#000080"/><rect x="0" y="5" width="1" height="1" fill="#fff"/><rect x="1" y="5" width="1" height="1" fill="#000"/><rect x="2" y="5" width="5" height="1" fill="#fff"/><rect x="7" y="5" width="1" height="1" fill="#000"/><rect x="8" y="5" width="1" height="1" fill="#fff"/><rect x="9" y="5" width="1" height="1" fill="#000080"/><rect x="0" y="6" width="1" height="1" fill="#fff"/><rect x="1" y="6" width="1" height="1" fill="#000"/><rect x="2" y="6" width="5" height="1" fill="#fff"/><rect x="7" y="6" width="1" height="1" fill="#000"/><rect x="8" y="6" width="1" height="1" fill="#fff"/><rect x="9" y="6" width="1" height="1" fill="#000080"/><rect x="0" y="7" width="1" height="1" fill="#fff"/><rect x="1" y="7" width="1" height="1" fill="#000"/><rect x="2" y="7" width="2" height="1" fill="#fff"/><rect x="4" y="7" width="1" height="1" fill="#000"/><rect x="5" y="7" width="2" height="1" fill="#fff"/><rect x="7" y="7" width="1" height="1" fill="#000"/><rect x="8" y="7" width="1" height="1" fill="#fff"/><rect x="9" y="7" width="1" height="1" fill="#000080"/><rect x="0" y="8" width="3" height="1" fill="#000"/><rect x="3" y="8" width="2" height="1" fill="#fff"/><rect x="5" y="8" width="2" height="1" fill="#000"/><rect x="7" y="8" width="2" height="1" fill="#fff"/><rect x="9" y="8" width="1" height="1" fill="#000080"/><rect x="0" y="9" width="9" height="1" fill="#fff"/><rect x="9" y="9" width="1" height="1" fill="#000080"/><rect x="0" y="10" width="1" height="1" fill="#000"/><rect x="1" y="10" width="1" height="1" fill="#000080"/><rect x="2" y="10" width="1" height="1" fill="#000"/><rect x="3" y="10" width="1" height="1" fill="#000080"/><rect x="4" y="10" width="1" height="1" fill="#000"/><rect x="5" y="10" width="1" height="1" fill="#000080"/><rect x="6" y="10" width="1" height="1" fill="#000"/><rect x="7" y="10" width="1" height="1" fill="#000080"/><rect x="8" y="10" width="1" height="1" fill="#000"/><rect x="9" y="10" width="1" height="1" fill="#000080"/></svg>
<div style="position:absolute;left:570px;top:51px;width:75px;height:22px;box-sizing:border-box;background:#d4d0c8;border:1px solid;border-color:#ffffff #404040 #404040 #ffffff;box-shadow:inset -1px -1px #808080;"></div>
<svg style="position:absolute;left:578px;top:54px" width="13" height="16" viewBox="0 0 13 16" shape-rendering="crispEdges"><rect x="0" y="0" width="9" height="1" fill="#808080"/><rect x="9" y="0" width="1" height="1" fill="#fff"/><rect x="0" y="1" width="1" height="1" fill="#808080"/><rect x="1" y="1" width="5" height="1" fill="#fff"/><rect x="6" y="1" width="1" height="1" fill="#f0f080"/><rect x="7" y="1" width="1" height="1" fill="#fff"/><rect x="8" y="1" width="1" height="1" fill="#f0f080"/><rect x="9" y="1" width="2" height="1" fill="#000"/><rect x="0" y="2" width="1" height="1" fill="#808080"/><rect x="1" y="2" width="4" height="1" fill="#fff"/><rect x="5" y="2" width="1" height="1" fill="#f0f080"/><rect x="6" y="2" width="1" height="1" fill="#fff"/><rect x="7" y="2" width="1" height="1" fill="#00a000"/><rect x="8" y="2" width="1" height="1" fill="#fff"/><rect x="9" y="2" width="1" height="1" fill="#000"/><rect x="10" y="2" width="1" height="1" fill="#fff"/><rect x="11" y="2" width="1" height="1" fill="#000"/><rect x="0" y="3" width="1" height="1" fill="#808080"/><rect x="1" y="3" width="1" height="1" fill="#fff"/><rect x="2" y="3" width="1" height="1" fill="#f0f080"/><rect x="3" y="3" width="3" height="1" fill="#fff"/><rect x="6" y="3" width="1" height="1" fill="#f0f080"/><rect x="7" y="3" width="2" height="1" fill="#00a000"/><rect x="9" y="3" width="4" height="1" fill="#000"/><rect x="0" y="4" width="1" height="1" fill="#808080"/><rect x="1" y="4" width="3" height="1" fill="#fff"/><rect x="4" y="4" width="1" height="1" fill="#f0f080"/><rect x="5" y="4" width="2" height="1" fill="#fff"/><rect x="7" y="4" width="3" height="1" fill="#00a000"/><rect x="10" y="4" width="2" height="1" fill="#fff"/><rect x="12" y="4" width="1" height="1" fill="#000"/><rect x="0" y="5" width="1" height="1" fill="#808080"/><rect x="1" y="5" width="2" height="1" fill="#fff"/><rect x="3" y="5" width="8" height="1" fill="#00a000"/><rect x="11" y="5" width="1" height="1" fill="#fff"/><rect x="12" y="5" width="1" height="1" fill="#000"/><rect x="0" y="6" width="1" height="1" fill="#808080"/><rect x="1" y="6" width="1" height="1" fill="#fff"/><rect x="2" y="6" width="1" height="1" fill="#006890"/><rect x="3" y="6" width="2" height="1" fill="#fff"/><rect x="5" y="6" width="1" height="1" fill="#f0f080"/><rect x="6" y="6" width="1" height="1" fill="#fff"/><rect x="7" y="6" width="3" height="1" fill="#00a000"/><rect x="10" y="6" width="1" height="1" fill="#f0f080"/><rect x="11" y="6" width="1" height="1" fill="#fff"/><rect x="12" y="6" width="1" height="1" fill="#000"/><rect x="0" y="7" width="1" height="1" fill="#808080"/><rect x="1" y="7" width="1" height="1" fill="#fff"/><rect x="2" y="7" width="1" height="1" fill="#006890"/><rect x="3" y="7" width="1" height="1" fill="#fff"/><rect x="4" y="7" width="1" height="1" fill="#f0f080"/><rect x="5" y="7" width="2" height="1" fill="#fff"/><rect x="7" y="7" width="2" height="1" fill="#00a000"/><rect x="9" y="7" width="1" height="1" fill="#fff"/><rect x="10" y="7" width="1" height="1" fill="#f0f080"/><rect x="11" y="7" width="1" height="1" fill="#fff"/><rect x="12" y="7" width="1" height="1" fill="#000"/><rect x="0" y="8" width="1" height="1" fill="#808080"/><rect x="1" y="8" width="1" height="1" fill="#fff"/><rect x="2" y="8" width="1" height="1" fill="#006890"/><rect x="3" y="8" width="3" height="1" fill="#fff"/><rect x="6" y="8" width="1" height="1" fill="#00a000"/><rect x="7" y="8" width="1" height="1" fill="#fff"/><rect x="8" y="8" width="1" height="1" fill="#00a000"/><rect x="9" y="8" width="1" height="1" fill="#fff"/><rect x="10" y="8" width="1" height="1" fill="#006890"/><rect x="11" y="8" width="1" height="1" fill="#fff"/><rect x="12" y="8" width="1" height="1" fill="#000"/><rect x="0" y="9" width="1" height="1" fill="#808080"/><rect x="1" y="9" width="1" height="1" fill="#fff"/><rect x="2" y="9" width="1" height="1" fill="#006890"/><rect x="3" y="9" width="2" height="1" fill="#fff"/><rect x="5" y="9" width="2" height="1" fill="#00a000"/><rect x="7" y="9" width="1" height="1" fill="#f0f080"/><rect x="8" y="9" width="1" height="1" fill="#fff"/><rect x="9" y="9" width="1" height="1" fill="#f0f080"/><rect x="10" y="9" width="1" height="1" fill="#006890"/><rect x="11" y="9" width="1" height="1" fill="#fff"/><rect x="12" y="9" width="1" height="1" fill="#000"/><rect x="0" y="10" width="1" height="1" fill="#808080"/><rect x="1" y="10" width="1" height="1" fill="#fff"/><rect x="2" y="10" width="1" height="1" fill="#f0f080"/><rect x="3" y="10" width="1" height="1" fill="#fff"/><rect x="4" y="10" width="3" height="1" fill="#00a000"/><rect x="7" y="10" width="1" height="1" fill="#fff"/><rect x="8" y="10" width="1" height="1" fill="#f0f080"/><rect x="9" y="10" width="1" height="1" fill="#fff"/><rect x="10" y="10" width="1" height="1" fill="#006890"/><rect x="11" y="10" width="1" height="1" fill="#fff"/><rect x="12" y="10" width="1" height="1" fill="#000"/><rect x="0" y="11" width="1" height="1" fill="#808080"/><rect x="1" y="11" width="2" height="1" fill="#fff"/><rect x="3" y="11" width="7" height="1" fill="#00a000"/><rect x="10" y="11" width="2" height="1" fill="#fff"/><rect x="12" y="11" width="1" height="1" fill="#000"/><rect x="0" y="12" width="1" height="1" fill="#808080"/><rect x="1" y="12" width="1" height="1" fill="#fff"/><rect x="2" y="12" width="1" height="1" fill="#f0f080"/><rect x="3" y="12" width="1" height="1" fill="#fff"/><rect x="4" y="12" width="3" height="1" fill="#00a000"/><rect x="7" y="12" width="1" height="1" fill="#fff"/><rect x="8" y="12" width="1" height="1" fill="#f0f080"/><rect x="9" y="12" width="3" height="1" fill="#fff"/><rect x="12" y="12" width="1" height="1" fill="#000"/><rect x="0" y="13" width="1" height="1" fill="#808080"/><rect x="1" y="13" width="2" height="1" fill="#fff"/><rect x="3" y="13" width="1" height="1" fill="#f0f080"/><rect x="4" y="13" width="1" height="1" fill="#fff"/><rect x="5" y="13" width="2" height="1" fill="#00a000"/><rect x="7" y="13" width="1" height="1" fill="#f0f080"/><rect x="8" y="13" width="4" height="1" fill="#fff"/><rect x="12" y="13" width="1" height="1" fill="#000"/><rect x="0" y="14" width="1" height="1" fill="#808080"/><rect x="1" y="14" width="1" height="1" fill="#fff"/><rect x="2" y="14" width="1" height="1" fill="#f0f080"/><rect x="3" y="14" width="1" height="1" fill="#fff"/><rect x="4" y="14" width="1" height="1" fill="#f0f080"/><rect x="5" y="14" width="1" height="1" fill="#fff"/><rect x="6" y="14" width="1" height="1" fill="#00a000"/><rect x="7" y="14" width="1" height="1" fill="#fff"/><rect x="8" y="14" width="1" height="1" fill="#f0f080"/><rect x="9" y="14" width="3" height="1" fill="#fff"/><rect x="12" y="14" width="1" height="1" fill="#000"/><rect x="0" y="15" width="13" height="1" fill="#000"/></svg>
<div class="t" style="left:596px;top:57px;color:#000;letter-spacing:-0.2px;"><u>A</u>tualizar</div>
<div class="t" style="left:12px;top:85px;color:#1a0a80;font-weight:bold;font-size:13px;letter-spacing:0.04px;">Conta: 3.1.1.1 - Vendas Brutas de Mercadorias</div>
<div class="t" style="left:334px;top:85px;color:#1a0a80;font-weight:bold;font-size:12px;letter-spacing:0.15px;">Saldo inicial:</div>
<div class="t" style="left:414px;top:86px;color:#1a0a80;font-weight:bold;font-size:13px;letter-spacing:0.6px;">0,00</div>
<div class="t" style="left:510px;top:85px;color:#1a0a80;font-weight:bold;font-size:12px;letter-spacing:0.3px;">Saldo final:</div>
<div class="t" style="left:582px;top:86px;color:#1a0a80;font-weight:bold;font-size:13px;letter-spacing:0.4px;">8,93</div>
<div style="position:absolute;left:4px;top:104px;width:854px;height:201px;box-sizing:border-box;background:#d4d0c8;border:1px solid;border-color:#808080 #ffffff #ffffff #808080;box-shadow:inset 1px 1px #404040,inset -1px -1px #d4d0c8;"></div>
<div style="position:absolute;left:6px;top:106px;width:11px;height:34px;box-sizing:border-box;background:#d4d0c8;border:1px solid;border-color:#ffffff #808080 #808080 #ffffff;"></div>
<div style="position:absolute;left:18px;top:106px;width:112px;height:34px;box-sizing:border-box;background:#d4d0c8;border:1px solid;border-color:#ffffff #808080 #808080 #ffffff;"></div>
<div style="position:absolute;left:131px;top:106px;width:191px;height:34px;box-sizing:border-box;background:#d4d0c8;border:1px solid;border-color:#ffffff #808080 #808080 #ffffff;"></div>
<div style="position:absolute;left:323px;top:106px;width:97px;height:34px;box-sizing:border-box;background:#d4d0c8;border:1px solid;border-color:#ffffff #808080 #808080 #ffffff;"></div>
<div style="position:absolute;left:421px;top:106px;width:64px;height:34px;box-sizing:border-box;background:#d4d0c8;border:1px solid;border-color:#ffffff #808080 #808080 #ffffff;"></div>
<div style="position:absolute;left:486px;top:106px;width:285px;height:34px;box-sizing:border-box;background:#d4d0c8;border:1px solid;border-color:#ffffff #808080 #808080 #ffffff;"></div>
<div style="position:absolute;left:772px;top:106px;width:68px;height:34px;box-sizing:border-box;background:#d4d0c8;border:1px solid;border-color:#ffffff #808080 #808080 #ffffff;"></div>
<div style="position:absolute;left:17px;top:106px;width:1px;height:35px;background:#000"></div>
<div style="position:absolute;left:130px;top:106px;width:1px;height:35px;background:#000"></div>
<div style="position:absolute;left:322px;top:106px;width:1px;height:35px;background:#000"></div>
<div style="position:absolute;left:420px;top:106px;width:1px;height:35px;background:#000"></div>
<div style="position:absolute;left:485px;top:106px;width:1px;height:35px;background:#000"></div>
<div style="position:absolute;left:771px;top:106px;width:1px;height:35px;background:#000"></div>
<div style="position:absolute;left:6px;top:140px;width:834px;height:1px;background:#000"></div>
<div class="t" style="left:20px;top:117px;width:108px;text-align:left;color:#000;letter-spacing:-0.2px;">Data de Movimento</div>
<div class="t" style="left:133px;top:117px;width:188px;text-align:left;color:#000;letter-spacing:-0.2px;">Nome da Pessoa</div>
<div class="t" style="left:325px;top:117px;width:94px;text-align:left;color:#000;letter-spacing:-0.2px;">Documento</div>
<div class="t" style="left:421px;top:117px;width:59px;text-align:right;color:#000;letter-spacing:-0.2px;">Valor</div>
<div class="t" style="left:488px;top:117px;width:280px;text-align:left;color:#000;letter-spacing:-0.2px;">Descrição</div>
<div class="t" style="left:774px;top:117px;width:66px;text-align:left;color:#000;letter-spacing:-0.2px;">Observação</div>
<svg style="position:absolute;left:115px;top:111px" width="4" height="8" viewBox="0 0 4 8" shape-rendering="crispEdges"><rect x="1" y="0" width="1" height="1" fill="#fff"/><rect x="0" y="1" width="2" height="1" fill="#fff"/><rect x="1" y="2" width="1" height="1" fill="#fff"/><rect x="1" y="3" width="1" height="1" fill="#fff"/><rect x="1" y="4" width="1" height="1" fill="#fff"/><rect x="1" y="5" width="1" height="1" fill="#fff"/><rect x="1" y="6" width="1" height="1" fill="#fff"/><rect x="0" y="7" width="3" height="1" fill="#fff"/></svg>
<svg style="position:absolute;left:120px;top:108px" width="9" height="10" viewBox="0 0 9 10" shape-rendering="crispEdges"><rect x="3" y="0" width="1" height="1" fill="#808080"/><rect x="3" y="1" width="1" height="1" fill="#808080"/><rect x="4" y="1" width="1" height="1" fill="#fff"/><rect x="2" y="2" width="1" height="1" fill="#808080"/><rect x="4" y="2" width="1" height="1" fill="#fff"/><rect x="2" y="3" width="1" height="1" fill="#808080"/><rect x="5" y="3" width="1" height="1" fill="#fff"/><rect x="1" y="4" width="1" height="1" fill="#808080"/><rect x="5" y="4" width="1" height="1" fill="#fff"/><rect x="1" y="5" width="1" height="1" fill="#808080"/><rect x="6" y="5" width="1" height="1" fill="#fff"/><rect x="0" y="6" width="1" height="1" fill="#808080"/><rect x="6" y="6" width="1" height="1" fill="#fff"/><rect x="0" y="7" width="1" height="1" fill="#808080"/><rect x="7" y="7" width="1" height="1" fill="#fff"/><rect x="7" y="8" width="1" height="1" fill="#fff"/><rect x="0" y="9" width="8" height="1" fill="#fff"/></svg>
<div style="position:absolute;left:18px;top:141px;width:822px;height:17px;background:#f7f7f7"></div>
<div style="position:absolute;left:18px;top:158px;width:822px;height:1px;background:#c8c8c8"></div>
<div style="position:absolute;left:6px;top:141px;width:11px;height:17px;box-sizing:border-box;background:#d4d0c8;border:1px solid;border-color:#ffffff #808080 #808080 #ffffff;"></div>
<div style="position:absolute;left:17px;top:141px;width:1px;height:18px;background:#000"></div>
<div style="position:absolute;left:6px;top:158px;width:12px;height:1px;background:#000"></div>
<div class="t" style="left:20px;top:144px;color:#1a0a80;letter-spacing:0.15px;">06/10/11 18:18</div>
<div class="t" style="left:133px;top:144px;width:189px;color:#000;overflow:hidden;"><span style="display:inline-block;transform:scaleX(0.9);transform-origin:0 0">BARZINHO DO CENTRO</span></div>
<div class="t" style="left:325px;top:144px;color:#000;letter-spacing:0.1px;">NF 000000002</div>
<div class="t" style="left:421px;top:144px;width:61px;text-align:right;color:#800000;">48,00</div>
<div class="t" style="left:488px;top:144px;color:#000;letter-spacing:-0.15px;">Venda de Produto e/ou Serviço</div>
<div style="position:absolute;left:18px;top:159px;width:822px;height:17px;background:#cde7ec"></div>
<div style="position:absolute;left:18px;top:176px;width:822px;height:1px;background:#c8c8c8"></div>
<div style="position:absolute;left:6px;top:159px;width:11px;height:17px;box-sizing:border-box;background:#d4d0c8;border:1px solid;border-color:#ffffff #808080 #808080 #ffffff;"></div>
<div style="position:absolute;left:17px;top:159px;width:1px;height:18px;background:#000"></div>
<div style="position:absolute;left:6px;top:176px;width:12px;height:1px;background:#000"></div>
<div class="t" style="left:20px;top:162px;color:#000;letter-spacing:0.15px;">06/10/11 18:18</div>
<div style="position:absolute;left:131px;top:159px;width:191px;height:17px;background:linear-gradient(#0a246a,#0a246a) padding-box,#000 border-box;box-sizing:border-box;border:1px dotted #f0d890;"></div>
<div class="t" style="left:133px;top:162px;width:188px;color:#fff;"><span style="display:inline-block;transform:scaleX(0.9);transform-origin:0 0">BARZINHO DO CENTRO</span></div>
<div class="t" style="left:325px;top:162px;color:#000;letter-spacing:0.1px;">NF 000000003</div>
<div class="t" style="left:421px;top:162px;width:61px;text-align:right;color:#000;">279,00</div>
<div class="t" style="left:488px;top:162px;color:#000;letter-spacing:-0.15px;">Venda de Produto e/ou Serviço</div>
<div style="position:absolute;left:18px;top:177px;width:822px;height:17px;background:#f7f7f7"></div>
<div style="position:absolute;left:18px;top:194px;width:822px;height:1px;background:#c8c8c8"></div>
<div style="position:absolute;left:6px;top:177px;width:11px;height:17px;box-sizing:border-box;background:#d4d0c8;border:1px solid;border-color:#ffffff #808080 #808080 #ffffff;"></div>
<div style="position:absolute;left:17px;top:177px;width:1px;height:18px;background:#000"></div>
<div style="position:absolute;left:6px;top:194px;width:12px;height:1px;background:#000"></div>
<div class="t" style="left:20px;top:180px;color:#1a0a80;letter-spacing:0.15px;">06/10/11 18:18</div>
<div class="t" style="left:133px;top:180px;width:189px;color:#000;overflow:hidden;"><span style="display:inline-block;transform:scaleX(0.9);transform-origin:0 0">MERCADINHO BOM PREÇO</span></div>
<div class="t" style="left:325px;top:180px;color:#000;letter-spacing:0.1px;">NF 000000004</div>
<div class="t" style="left:421px;top:180px;width:61px;text-align:right;color:#800000;">123,30</div>
<div class="t" style="left:488px;top:180px;color:#000;letter-spacing:-0.15px;">Venda de Produto e/ou Serviço</div>
<div style="position:absolute;left:18px;top:195px;width:822px;height:17px;background:#ffffff"></div>
<div style="position:absolute;left:18px;top:212px;width:822px;height:1px;background:#c8c8c8"></div>
<div style="position:absolute;left:6px;top:195px;width:11px;height:17px;box-sizing:border-box;background:#d4d0c8;border:1px solid;border-color:#ffffff #808080 #808080 #ffffff;"></div>
<div style="position:absolute;left:17px;top:195px;width:1px;height:18px;background:#000"></div>
<div style="position:absolute;left:6px;top:212px;width:12px;height:1px;background:#000"></div>
<div class="t" style="left:20px;top:198px;color:#1a0a80;letter-spacing:0.15px;">06/10/11 18:18</div>
<div class="t" style="left:133px;top:198px;width:189px;color:#000;overflow:hidden;"><span style="display:inline-block;transform:scaleX(0.9);transform-origin:0 0">MERCADINHO BOM PREÇO</span></div>
<div class="t" style="left:325px;top:198px;color:#000;letter-spacing:0.1px;">NF 000000001</div>
<div class="t" style="left:421px;top:198px;width:61px;text-align:right;color:#800000;">48,60</div>
<div class="t" style="left:488px;top:198px;color:#000;letter-spacing:-0.15px;">Venda de Produto e/ou Serviço</div>
<div style="position:absolute;left:18px;top:213px;width:822px;height:17px;background:#f7f7f7"></div>
<div style="position:absolute;left:18px;top:230px;width:822px;height:1px;background:#c8c8c8"></div>
<div style="position:absolute;left:6px;top:213px;width:11px;height:17px;box-sizing:border-box;background:#d4d0c8;border:1px solid;border-color:#ffffff #808080 #808080 #ffffff;"></div>
<div style="position:absolute;left:17px;top:213px;width:1px;height:18px;background:#000"></div>
<div style="position:absolute;left:6px;top:230px;width:12px;height:1px;background:#000"></div>
<div class="t" style="left:20px;top:216px;color:#1a0a80;letter-spacing:0.15px;">10/10/11 10:58</div>
<div class="t" style="left:133px;top:216px;width:189px;color:#000;overflow:hidden;"><span style="display:inline-block;transform:scaleX(0.9);transform-origin:0 0">ESCRITÓRIO DE CONTABILIDADE EXEMPLO</span></div>
<div class="t" style="left:325px;top:216px;color:#000;letter-spacing:0.1px;">NF 000000005</div>
<div class="t" style="left:421px;top:216px;width:61px;text-align:right;color:#800000;">41,00</div>
<div class="t" style="left:488px;top:216px;color:#000;letter-spacing:-0.15px;">Venda de Produto e/ou Serviço</div>
<div style="position:absolute;left:18px;top:231px;width:822px;height:17px;background:#ffffff"></div>
<div style="position:absolute;left:18px;top:248px;width:822px;height:1px;background:#c8c8c8"></div>
<div style="position:absolute;left:6px;top:231px;width:11px;height:17px;box-sizing:border-box;background:#d4d0c8;border:1px solid;border-color:#ffffff #808080 #808080 #ffffff;"></div>
<div style="position:absolute;left:17px;top:231px;width:1px;height:18px;background:#000"></div>
<div style="position:absolute;left:6px;top:248px;width:12px;height:1px;background:#000"></div>
<div class="t" style="left:20px;top:234px;color:#1a0a80;letter-spacing:0.15px;">10/10/11 10:58</div>
<div class="t" style="left:133px;top:234px;width:189px;color:#000;overflow:hidden;"><span style="display:inline-block;transform:scaleX(0.9);transform-origin:0 0">BARZINHO DO CENTRO</span></div>
<div class="t" style="left:325px;top:234px;color:#000;letter-spacing:0.1px;">NF 000000006</div>
<div class="t" style="left:421px;top:234px;width:61px;text-align:right;color:#800000;">46,59</div>
<div class="t" style="left:488px;top:234px;color:#000;letter-spacing:-0.15px;">Venda de Produto e/ou Serviço</div>
<div style="position:absolute;left:18px;top:249px;width:822px;height:17px;background:#f7f7f7"></div>
<div style="position:absolute;left:18px;top:266px;width:822px;height:1px;background:#c8c8c8"></div>
<div style="position:absolute;left:6px;top:249px;width:11px;height:17px;box-sizing:border-box;background:#d4d0c8;border:1px solid;border-color:#ffffff #808080 #808080 #ffffff;"></div>
<div style="position:absolute;left:17px;top:249px;width:1px;height:18px;background:#000"></div>
<div style="position:absolute;left:6px;top:266px;width:12px;height:1px;background:#000"></div>
<div class="t" style="left:20px;top:252px;color:#1a0a80;letter-spacing:0.15px;">13/10/11 11:22</div>
<div class="t" style="left:133px;top:252px;width:189px;color:#000;overflow:hidden;"><span style="display:inline-block;transform:scaleX(0.9);transform-origin:0 0">BARZINHO DO CENTRO</span></div>
<div class="t" style="left:325px;top:252px;color:#000;letter-spacing:0.1px;">NF 000000001</div>
<div class="t" style="left:421px;top:252px;width:61px;text-align:right;color:#800000;">60,30</div>
<div class="t" style="left:488px;top:252px;color:#000;letter-spacing:-0.15px;">Venda de Produto e/ou Serviço</div>
<div style="position:absolute;left:18px;top:267px;width:822px;height:17px;background:#ffffff"></div>
<div style="position:absolute;left:18px;top:284px;width:822px;height:1px;background:#c8c8c8"></div>
<div style="position:absolute;left:6px;top:267px;width:11px;height:17px;box-sizing:border-box;background:#d4d0c8;border:1px solid;border-color:#ffffff #808080 #808080 #ffffff;"></div>
<div style="position:absolute;left:17px;top:267px;width:1px;height:18px;background:#000"></div>
<div style="position:absolute;left:6px;top:284px;width:12px;height:1px;background:#000"></div>
<div class="t" style="left:20px;top:270px;color:#1a0a80;letter-spacing:0.15px;">20/10/11 09:10</div>
<div class="t" style="left:133px;top:270px;width:189px;color:#000;overflow:hidden;"><span style="display:inline-block;transform:scaleX(0.9);transform-origin:0 0">BARZINHO DO CENTRO</span></div>
<div class="t" style="left:325px;top:270px;color:#000;letter-spacing:0.1px;">NF 000000007</div>
<div class="t" style="left:421px;top:270px;width:61px;text-align:right;color:#800000;">90,00</div>
<div class="t" style="left:488px;top:270px;color:#000;letter-spacing:-0.15px;">Venda de Produto e/ou Serviço</div>
<div style="position:absolute;left:130px;top:141px;width:1px;height:144px;background:#c8c8c8"></div>
<div style="position:absolute;left:322px;top:141px;width:1px;height:144px;background:#c8c8c8"></div>
<div style="position:absolute;left:420px;top:141px;width:1px;height:144px;background:#c8c8c8"></div>
<div style="position:absolute;left:485px;top:141px;width:1px;height:144px;background:#c8c8c8"></div>
<div style="position:absolute;left:771px;top:141px;width:1px;height:144px;background:#c8c8c8"></div>
<svg style="position:absolute;left:9px;top:162px" width="6" height="11" viewBox="0 0 6 11" shape-rendering="crispEdges"><rect x="0" y="0" width="1" height="1" fill="#000"/><rect x="0" y="1" width="2" height="1" fill="#000"/><rect x="0" y="2" width="3" height="1" fill="#000"/><rect x="0" y="3" width="4" height="1" fill="#000"/><rect x="0" y="4" width="5" height="1" fill="#000"/><rect x="0" y="5" width="6" height="1" fill="#000"/><rect x="0" y="6" width="5" height="1" fill="#000"/><rect x="0" y="7" width="4" height="1" fill="#000"/><rect x="0" y="8" width="3" height="1" fill="#000"/><rect x="0" y="9" width="2" height="1" fill="#000"/><rect x="0" y="10" width="1" height="1" fill="#000"/></svg>
<div style="position:absolute;left:840px;top:106px;width:16px;height:181px;background-color:#fff;background-image:conic-gradient(#d4d0c8 25%,transparent 0 50%,#d4d0c8 0 75%,transparent 0);background-size:2px 2px;"></div>
<div style="position:absolute;left:840px;top:106px;width:16px;height:16px;box-sizing:border-box;background:#d4d0c8;border:1px solid;border-color:#d4d0c8 #404040 #404040 #d4d0c8;box-shadow:inset 1px 1px #ffffff,inset -1px -1px #808080;"></div>
<svg style="position:absolute;left:844px;top:112px" width="7" height="4" viewBox="0 0 7 4" shape-rendering="crispEdges"><rect x="3" y="0" width="1" height="1" fill="#000"/><rect x="2" y="1" width="3" height="1" fill="#000"/><rect x="1" y="2" width="5" height="1" fill="#000"/><rect x="0" y="3" width="7" height="1" fill="#000"/></svg>
<div style="position:absolute;left:840px;top:189px;width:16px;height:16px;box-sizing:border-box;background:#d4d0c8;border:1px solid;border-color:#d4d0c8 #404040 #404040 #d4d0c8;box-shadow:inset 1px 1px #ffffff,inset -1px -1px #808080;"></div>
<div style="position:absolute;left:840px;top:271px;width:16px;height:16px;box-sizing:border-box;background:#d4d0c8;border:1px solid;border-color:#d4d0c8 #404040 #404040 #d4d0c8;box-shadow:inset 1px 1px #ffffff,inset -1px -1px #808080;"></div>
<svg style="position:absolute;left:844px;top:277px" width="7" height="4" viewBox="0 0 7 4" shape-rendering="crispEdges"><rect x="0" y="0" width="7" height="1" fill="#000"/><rect x="1" y="1" width="5" height="1" fill="#000"/><rect x="2" y="2" width="3" height="1" fill="#000"/><rect x="3" y="3" width="1" height="1" fill="#000"/></svg>
<div style="position:absolute;left:6px;top:285px;width:834px;height:2px;background:#fff"></div>
<div style="position:absolute;left:6px;top:287px;width:834px;height:16px;background-color:#fff;background-image:conic-gradient(#d4d0c8 25%,transparent 0 50%,#d4d0c8 0 75%,transparent 0);background-size:2px 2px;"></div>
<div style="position:absolute;left:6px;top:287px;width:16px;height:16px;box-sizing:border-box;background:#d4d0c8;border:1px solid;border-color:#d4d0c8 #404040 #404040 #d4d0c8;box-shadow:inset 1px 1px #ffffff,inset -1px -1px #808080;"></div>
<svg style="position:absolute;left:11px;top:291px" width="4" height="7" viewBox="0 0 4 7" shape-rendering="crispEdges"><rect x="3" y="0" width="1" height="1" fill="#000"/><rect x="2" y="1" width="2" height="1" fill="#000"/><rect x="1" y="2" width="3" height="1" fill="#000"/><rect x="0" y="3" width="4" height="1" fill="#000"/><rect x="1" y="4" width="3" height="1" fill="#000"/><rect x="2" y="5" width="2" height="1" fill="#000"/><rect x="3" y="6" width="1" height="1" fill="#000"/></svg>
<div style="position:absolute;left:22px;top:287px;width:16px;height:16px;box-sizing:border-box;background:#d4d0c8;border:1px solid;border-color:#d4d0c8 #404040 #404040 #d4d0c8;box-shadow:inset 1px 1px #ffffff,inset -1px -1px #808080;"></div>
<div style="position:absolute;left:824px;top:287px;width:16px;height:16px;box-sizing:border-box;background:#d4d0c8;border:1px solid;border-color:#d4d0c8 #404040 #404040 #d4d0c8;box-shadow:inset 1px 1px #ffffff,inset -1px -1px #808080;"></div>
<svg style="position:absolute;left:830px;top:291px" width="4" height="7" viewBox="0 0 4 7" shape-rendering="crispEdges"><rect x="0" y="0" width="1" height="1" fill="#000"/><rect x="0" y="1" width="2" height="1" fill="#000"/><rect x="0" y="2" width="3" height="1" fill="#000"/><rect x="0" y="3" width="4" height="1" fill="#000"/><rect x="0" y="4" width="3" height="1" fill="#000"/><rect x="0" y="5" width="2" height="1" fill="#000"/><rect x="0" y="6" width="1" height="1" fill="#000"/></svg>
<div style="position:absolute;left:4px;top:305px;width:854px;height:191px;box-sizing:border-box;border:1px solid;border-color:#808080 #ffffff #ffffff #808080;box-shadow:inset 1px 1px #ffffff,inset -1px -1px #808080;"></div>
<div style="position:absolute;left:6px;top:307px;width:850px;height:31px;box-sizing:border-box;background:#d4d0c8;border:1px solid;border-color:#ffffff #808080 #808080 #ffffff;"></div>
<div style="position:absolute;left:6px;top:337px;width:850px;height:1px;background:#808080"></div>
<div style="position:absolute;left:407px;top:318px;width:1px;height:18px;background:#808080"></div>
<div style="position:absolute;left:408px;top:318px;width:1px;height:18px;background:#ffffff"></div>
<div style="position:absolute;left:407px;top:338px;width:1px;height:157px;background:#808080"></div>
<div style="position:absolute;left:408px;top:338px;width:1px;height:157px;background:#ffffff"></div>
<div class="t" style="left:15px;top:316px;color:#000;font-weight:bold;letter-spacing:0.4px;">Lançamento Atual:</div>
<div class="t" style="left:127px;top:316px;color:#0000ff;font-size:13px;">Receita</div>
<div class="t" style="left:417px;top:321px;color:#000;font-weight:bold;letter-spacing:0.45px;">Lançamentos a Débito:</div>
<div class="t" style="left:0px;top:352px;width:83px;text-align:right;color:#000;">Descrição:</div>
<div class="t" style="left:0px;top:384px;width:83px;text-align:right;color:#000;">Pessoa:</div>
<div class="t" style="left:0px;top:408px;width:83px;text-align:right;color:#000;">Documento:</div>
<div class="t" style="left:0px;top:432px;width:83px;text-align:right;color:#000;">Data:</div>
<div class="t" style="left:0px;top:456px;width:83px;text-align:right;color:#000;">Observação:</div>
<div class="t" style="left:200px;top:432px;width:67px;text-align:right;color:#000;">Valor:</div>
<div style="position:absolute;left:90px;top:348px;width:309px;height:20px;box-sizing:border-box;background:#d4d0c8;border:1px solid;border-color:#808080 #ffffff #ffffff #808080;box-shadow:inset 1px 1px #404040,inset -1px -1px #d4d0c8;"></div>
<div class="t" style="left:93px;top:352px;width:302px;text-align:left;color:#000;">Venda de Produto e/ou Serviço</div>
<div style="position:absolute;left:90px;top:380px;width:309px;height:20px;box-sizing:border-box;background:#d4d0c8;border:1px solid;border-color:#808080 #ffffff #ffffff #808080;box-shadow:inset 1px 1px #404040,inset -1px -1px #d4d0c8;"></div>
<div class="t" style="left:93px;top:384px;width:302px;text-align:left;color:#000;"><span style='display:inline-block;transform:scaleX(0.9);transform-origin:0 0'>BARZINHO DO CENTRO</span></div>
<div style="position:absolute;left:90px;top:404px;width:141px;height:20px;box-sizing:border-box;background:#d4d0c8;border:1px solid;border-color:#808080 #ffffff #ffffff #808080;box-shadow:inset 1px 1px #404040,inset -1px -1px #d4d0c8;"></div>
<div class="t" style="left:93px;top:408px;width:134px;text-align:left;color:#000;">NF 000000003</div>
<div style="position:absolute;left:90px;top:428px;width:117px;height:20px;box-sizing:border-box;background:#d4d0c8;border:1px solid;border-color:#808080 #ffffff #ffffff #808080;box-shadow:inset 1px 1px #404040,inset -1px -1px #d4d0c8;"></div>
<div class="t" style="left:93px;top:432px;width:110px;text-align:left;color:#000;">06/10/11 18:18</div>
<div style="position:absolute;left:271px;top:428px;width:128px;height:20px;box-sizing:border-box;background:#d4d0c8;border:1px solid;border-color:#808080 #ffffff #ffffff #808080;box-shadow:inset 1px 1px #404040,inset -1px -1px #d4d0c8;"></div>
<div class="t" style="left:274px;top:432px;width:121px;text-align:right;color:#000;">279,00</div>
<div style="position:absolute;left:90px;top:451px;width:309px;height:35px;box-sizing:border-box;background:#d4d0c8;border:1px solid;border-color:#808080 #ffffff #ffffff #808080;box-shadow:inset 1px 1px #404040,inset -1px -1px #d4d0c8;"></div>
<div style="position:absolute;left:413px;top:338px;width:443px;height:128px;box-sizing:border-box;background:#ffffff;border:1px solid;border-color:#808080 #ffffff #ffffff #808080;box-shadow:inset 1px 1px #404040,inset -1px -1px #d4d0c8;"></div>
<div style="position:absolute;left:415px;top:340px;width:11px;height:17px;box-sizing:border-box;background:#d4d0c8;border:1px solid;border-color:#ffffff #808080 #808080 #ffffff;"></div>
<div style="position:absolute;left:427px;top:340px;width:60px;height:17px;box-sizing:border-box;background:#d4d0c8;border:1px solid;border-color:#ffffff #808080 #808080 #ffffff;"></div>
<div style="position:absolute;left:488px;top:340px;width:180px;height:17px;box-sizing:border-box;background:#d4d0c8;border:1px solid;border-color:#ffffff #808080 #808080 #ffffff;"></div>
<div style="position:absolute;left:669px;top:340px;width:78px;height:17px;box-sizing:border-box;background:#d4d0c8;border:1px solid;border-color:#ffffff #808080 #808080 #ffffff;"></div>
<div style="position:absolute;left:426px;top:340px;width:1px;height:18px;background:#000"></div>
<div style="position:absolute;left:487px;top:340px;width:1px;height:18px;background:#000"></div>
<div style="position:absolute;left:668px;top:340px;width:1px;height:18px;background:#000"></div>
<div style="position:absolute;left:747px;top:340px;width:1px;height:18px;background:#000"></div>
<div style="position:absolute;left:415px;top:357px;width:333px;height:1px;background:#000"></div>
<div class="t" style="left:429px;top:343px;color:#000;">Conta</div>
<div class="t" style="left:490px;top:343px;color:#000;">Nome da Conta</div>
<div class="t" style="left:669px;top:343px;width:73px;text-align:right;color:#000;">Valor</div>
<div style="position:absolute;left:415px;top:358px;width:11px;height:17px;box-sizing:border-box;background:#d4d0c8;border:1px solid;border-color:#ffffff #808080 #808080 #ffffff;"></div>
<div style="position:absolute;left:426px;top:358px;width:1px;height:18px;background:#000"></div>
<div style="position:absolute;left:415px;top:375px;width:12px;height:1px;background:#000"></div>
<svg style="position:absolute;left:418px;top:361px" width="6" height="11" viewBox="0 0 6 11" shape-rendering="crispEdges"><rect x="0" y="0" width="1" height="1" fill="#000"/><rect x="0" y="1" width="2" height="1" fill="#000"/><rect x="0" y="2" width="3" height="1" fill="#000"/><rect x="0" y="3" width="4" height="1" fill="#000"/><rect x="0" y="4" width="5" height="1" fill="#000"/><rect x="0" y="5" width="6" height="1" fill="#000"/><rect x="0" y="6" width="5" height="1" fill="#000"/><rect x="0" y="7" width="4" height="1" fill="#000"/><rect x="0" y="8" width="3" height="1" fill="#000"/><rect x="0" y="9" width="2" height="1" fill="#000"/><rect x="0" y="10" width="1" height="1" fill="#000"/></svg>
<div style="position:absolute;left:427px;top:375px;width:321px;height:1px;background:#c8c8c8"></div>
<div style="position:absolute;left:487px;top:358px;width:1px;height:18px;background:#c8c8c8"></div>
<div style="position:absolute;left:668px;top:358px;width:1px;height:18px;background:#c8c8c8"></div>
<div style="position:absolute;left:747px;top:358px;width:1px;height:18px;background:#c8c8c8"></div>
<div class="t" style="left:429px;top:361px;color:#000;letter-spacing:0.6px;">1.1.4</div>
<div class="t" style="left:490px;top:361px;color:#000;letter-spacing:-0.2px;">Clientes - Valores a Receber</div>
<div class="t" style="left:669px;top:361px;width:75px;text-align:right;color:#800000;">279,00</div>
<div style="position:absolute;left:413px;top:466px;width:443px;height:28px;box-sizing:border-box;border:1px solid;border-color:#808080 #ffffff #ffffff #808080;box-shadow:inset 1px 1px #ffffff,inset -1px -1px #808080;"></div>
<div class="t" style="left:417px;top:474px;color:#000;letter-spacing:-0.2px;">Modo de visualização:</div>
<svg style="position:absolute;left:528px;top:474px" width="12" height="12" viewBox="0 0 12 12" shape-rendering="crispEdges"><rect x="4" y="0" width="4" height="1" fill="#808080"/><rect x="2" y="1" width="2" height="1" fill="#808080"/><rect x="4" y="1" width="4" height="1" fill="#404040"/><rect x="8" y="1" width="2" height="1" fill="#808080"/><rect x="1" y="2" width="1" height="1" fill="#808080"/><rect x="2" y="2" width="2" height="1" fill="#404040"/><rect x="4" y="2" width="4" height="1" fill="#fff"/><rect x="8" y="2" width="2" height="1" fill="#404040"/><rect x="10" y="2" width="1" height="1" fill="#d4d0c8"/><rect x="1" y="3" width="1" height="1" fill="#808080"/><rect x="2" y="3" width="1" height="1" fill="#404040"/><rect x="3" y="3" width="6" height="1" fill="#fff"/><rect x="9" y="3" width="1" height="1" fill="#d4d0c8"/><rect x="10" y="3" width="1" height="1" fill="#fff"/><rect x="0" y="4" width="1" height="1" fill="#808080"/><rect x="1" y="4" width="1" height="1" fill="#404040"/><rect x="2" y="4" width="8" height="1" fill="#fff"/><rect x="10" y="4" width="1" height="1" fill="#d4d0c8"/><rect x="11" y="4" width="1" height="1" fill="#fff"/><rect x="0" y="5" width="1" height="1" fill="#808080"/><rect x="1" y="5" width="1" height="1" fill="#404040"/><rect x="2" y="5" width="8" height="1" fill="#fff"/><rect x="10" y="5" width="1" height="1" fill="#d4d0c8"/><rect x="11" y="5" width="1" height="1" fill="#fff"/><rect x="0" y="6" width="1" height="1" fill="#808080"/><rect x="1" y="6" width="1" height="1" fill="#404040"/><rect x="2" y="6" width="8" height="1" fill="#fff"/><rect x="10" y="6" width="1" height="1" fill="#d4d0c8"/><rect x="11" y="6" width="1" height="1" fill="#fff"/><rect x="0" y="7" width="1" height="1" fill="#808080"/><rect x="1" y="7" width="1" height="1" fill="#404040"/><rect x="2" y="7" width="8" height="1" fill="#fff"/><rect x="10" y="7" width="1" height="1" fill="#d4d0c8"/><rect x="11" y="7" width="1" height="1" fill="#fff"/><rect x="1" y="8" width="1" height="1" fill="#808080"/><rect x="2" y="8" width="1" height="1" fill="#404040"/><rect x="3" y="8" width="6" height="1" fill="#fff"/><rect x="9" y="8" width="1" height="1" fill="#d4d0c8"/><rect x="10" y="8" width="1" height="1" fill="#fff"/><rect x="1" y="9" width="1" height="1" fill="#fff"/><rect x="2" y="9" width="2" height="1" fill="#d4d0c8"/><rect x="4" y="9" width="4" height="1" fill="#fff"/><rect x="8" y="9" width="2" height="1" fill="#d4d0c8"/><rect x="10" y="9" width="1" height="1" fill="#fff"/><rect x="2" y="10" width="2" height="1" fill="#fff"/><rect x="4" y="10" width="4" height="1" fill="#d4d0c8"/><rect x="8" y="10" width="2" height="1" fill="#fff"/><rect x="4" y="11" width="4" height="1" fill="#fff"/></svg>
<div class="t" style="left:545px;top:474px;color:#000;">Árvore</div>
<svg style="position:absolute;left:588px;top:474px" width="12" height="12" viewBox="0 0 12 12" shape-rendering="crispEdges"><rect x="4" y="0" width="4" height="1" fill="#808080"/><rect x="2" y="1" width="2" height="1" fill="#808080"/><rect x="4" y="1" width="4" height="1" fill="#404040"/><rect x="8" y="1" width="2" height="1" fill="#808080"/><rect x="1" y="2" width="1" height="1" fill="#808080"/><rect x="2" y="2" width="2" height="1" fill="#404040"/><rect x="4" y="2" width="4" height="1" fill="#fff"/><rect x="8" y="2" width="2" height="1" fill="#404040"/><rect x="10" y="2" width="1" height="1" fill="#d4d0c8"/><rect x="1" y="3" width="1" height="1" fill="#808080"/><rect x="2" y="3" width="1" height="1" fill="#404040"/><rect x="3" y="3" width="6" height="1" fill="#fff"/><rect x="9" y="3" width="1" height="1" fill="#d4d0c8"/><rect x="10" y="3" width="1" height="1" fill="#fff"/><rect x="0" y="4" width="1" height="1" fill="#808080"/><rect x="1" y="4" width="1" height="1" fill="#404040"/><rect x="2" y="4" width="3" height="1" fill="#fff"/><rect x="5" y="4" width="2" height="1" fill="#000"/><rect x="7" y="4" width="3" height="1" fill="#fff"/><rect x="10" y="4" width="1" height="1" fill="#d4d0c8"/><rect x="11" y="4" width="1" height="1" fill="#fff"/><rect x="0" y="5" width="1" height="1" fill="#808080"/><rect x="1" y="5" width="1" height="1" fill="#404040"/><rect x="2" y="5" width="2" height="1" fill="#fff"/><rect x="4" y="5" width="4" height="1" fill="#000"/><rect x="8" y="5" width="2" height="1" fill="#fff"/><rect x="10" y="5" width="1" height="1" fill="#d4d0c8"/><rect x="11" y="5" width="1" height="1" fill="#fff"/><rect x="0" y="6" width="1" height="1" fill="#808080"/><rect x="1" y="6" width="1" height="1" fill="#404040"/><rect x="2" y="6" width="2" height="1" fill="#fff"/><rect x="4" y="6" width="4" height="1" fill="#000"/><rect x="8" y="6" width="2" height="1" fill="#fff"/><rect x="10" y="6" width="1" height="1" fill="#d4d0c8"/><rect x="11" y="6" width="1" height="1" fill="#fff"/><rect x="0" y="7" width="1" height="1" fill="#808080"/><rect x="1" y="7" width="1" height="1" fill="#404040"/><rect x="2" y="7" width="3" height="1" fill="#fff"/><rect x="5" y="7" width="2" height="1" fill="#000"/><rect x="7" y="7" width="3" height="1" fill="#fff"/><rect x="10" y="7" width="1" height="1" fill="#d4d0c8"/><rect x="11" y="7" width="1" height="1" fill="#fff"/><rect x="1" y="8" width="1" height="1" fill="#808080"/><rect x="2" y="8" width="1" height="1" fill="#404040"/><rect x="3" y="8" width="6" height="1" fill="#fff"/><rect x="9" y="8" width="1" height="1" fill="#d4d0c8"/><rect x="10" y="8" width="1" height="1" fill="#fff"/><rect x="1" y="9" width="1" height="1" fill="#fff"/><rect x="2" y="9" width="2" height="1" fill="#d4d0c8"/><rect x="4" y="9" width="4" height="1" fill="#fff"/><rect x="8" y="9" width="2" height="1" fill="#d4d0c8"/><rect x="10" y="9" width="1" height="1" fill="#fff"/><rect x="2" y="10" width="2" height="1" fill="#fff"/><rect x="4" y="10" width="4" height="1" fill="#d4d0c8"/><rect x="8" y="10" width="2" height="1" fill="#fff"/><rect x="4" y="11" width="4" height="1" fill="#fff"/></svg>
<div class="t" style="left:604px;top:474px;color:#000;">Tabela</div>
<div style="position:absolute;left:780px;top:501px;width:75px;height:25px;box-sizing:border-box;background:#d4d0c8;border:1px solid;border-color:#ffffff #404040 #404040 #ffffff;box-shadow:inset -1px -1px #808080;"></div>
<svg style="position:absolute;left:796px;top:506px" width="17" height="16" viewBox="0 0 17 16" shape-rendering="crispEdges"><rect x="5" y="0" width="11" height="1" fill="#000"/><rect x="5" y="1" width="1" height="1" fill="#000"/><rect x="6" y="1" width="3" height="1" fill="#ffff00"/><rect x="9" y="1" width="2" height="1" fill="#000"/><rect x="11" y="1" width="1" height="1" fill="#fff"/><rect x="12" y="1" width="1" height="1" fill="#808000"/><rect x="13" y="1" width="1" height="1" fill="#a0a0a0"/><rect x="14" y="1" width="1" height="1" fill="#808000"/><rect x="15" y="1" width="1" height="1" fill="#000"/><rect x="5" y="2" width="1" height="1" fill="#000"/><rect x="6" y="2" width="2" height="1" fill="#ffff00"/><rect x="8" y="2" width="1" height="1" fill="#000"/><rect x="9" y="2" width="1" height="1" fill="#fff"/><rect x="10" y="2" width="1" height="1" fill="#808000"/><rect x="11" y="2" width="1" height="1" fill="#a0a0a0"/><rect x="12" y="2" width="1" height="1" fill="#808000"/><rect x="13" y="2" width="1" height="1" fill="#a0a0a0"/><rect x="14" y="2" width="1" height="1" fill="#808000"/><rect x="15" y="2" width="1" height="1" fill="#000"/><rect x="5" y="3" width="1" height="1" fill="#000"/><rect x="6" y="3" width="2" height="1" fill="#ffff00"/><rect x="8" y="3" width="1" height="1" fill="#000"/><rect x="9" y="3" width="1" height="1" fill="#fff"/><rect x="10" y="3" width="1" height="1" fill="#a0a0a0"/><rect x="11" y="3" width="1" height="1" fill="#808000"/><rect x="12" y="3" width="1" height="1" fill="#a0a0a0"/><rect x="13" y="3" width="1" height="1" fill="#808000"/><rect x="14" y="3" width="1" height="1" fill="#a0a0a0"/><rect x="15" y="3" width="1" height="1" fill="#000"/><rect x="5" y="4" width="1" height="1" fill="#000"/><rect x="6" y="4" width="2" height="1" fill="#ffff00"/><rect x="8" y="4" width="1" height="1" fill="#000"/><rect x="9" y="4" width="1" height="1" fill="#fff"/><rect x="10" y="4" width="1" height="1" fill="#808000"/><rect x="11" y="4" width="1" height="1" fill="#a0a0a0"/><rect x="12" y="4" width="1" height="1" fill="#808000"/><rect x="13" y="4" width="1" height="1" fill="#a0a0a0"/><rect x="14" y="4" width="1" height="1" fill="#808000"/><rect x="15" y="4" width="1" height="1" fill="#000"/><rect x="5" y="5" width="1" height="1" fill="#000"/><rect x="6" y="5" width="2" height="1" fill="#ffff00"/><rect x="8" y="5" width="1" height="1" fill="#000"/><rect x="9" y="5" width="1" height="1" fill="#fff"/><rect x="10" y="5" width="1" height="1" fill="#a0a0a0"/><rect x="11" y="5" width="1" height="1" fill="#808000"/><rect x="12" y="5" width="1" height="1" fill="#a0a0a0"/><rect x="13" y="5" width="1" height="1" fill="#808000"/><rect x="14" y="5" width="1" height="1" fill="#a0a0a0"/><rect x="15" y="5" width="1" height="1" fill="#000"/><rect x="5" y="6" width="1" height="1" fill="#000"/><rect x="6" y="6" width="2" height="1" fill="#ffff00"/><rect x="8" y="6" width="1" height="1" fill="#000"/><rect x="9" y="6" width="1" height="1" fill="#fff"/><rect x="10" y="6" width="1" height="1" fill="#808000"/><rect x="11" y="6" width="1" height="1" fill="#a0a0a0"/><rect x="12" y="6" width="1" height="1" fill="#808000"/><rect x="13" y="6" width="1" height="1" fill="#a0a0a0"/><rect x="14" y="6" width="1" height="1" fill="#808000"/><rect x="15" y="6" width="1" height="1" fill="#000"/><rect x="5" y="7" width="1" height="1" fill="#000"/><rect x="6" y="7" width="2" height="1" fill="#ffff00"/><rect x="8" y="7" width="1" height="1" fill="#000"/><rect x="9" y="7" width="1" height="1" fill="#fff"/><rect x="10" y="7" width="1" height="1" fill="#a0a0a0"/><rect x="11" y="7" width="1" height="1" fill="#808000"/><rect x="12" y="7" width="1" height="1" fill="#a0a0a0"/><rect x="13" y="7" width="1" height="1" fill="#808000"/><rect x="14" y="7" width="1" height="1" fill="#a0a0a0"/><rect x="15" y="7" width="1" height="1" fill="#000"/><rect x="5" y="8" width="1" height="1" fill="#000"/><rect x="6" y="8" width="2" height="1" fill="#ffff00"/><rect x="8" y="8" width="1" height="1" fill="#000"/><rect x="9" y="8" width="1" height="1" fill="#fff"/><rect x="10" y="8" width="1" height="1" fill="#808000"/><rect x="11" y="8" width="1" height="1" fill="#a0a0a0"/><rect x="12" y="8" width="1" height="1" fill="#808000"/><rect x="13" y="8" width="1" height="1" fill="#a0a0a0"/><rect x="14" y="8" width="1" height="1" fill="#808000"/><rect x="15" y="8" width="1" height="1" fill="#000"/><rect x="5" y="9" width="1" height="1" fill="#000"/><rect x="6" y="9" width="2" height="1" fill="#ffff00"/><rect x="8" y="9" width="1" height="1" fill="#000"/><rect x="9" y="9" width="1" height="1" fill="#fff"/><rect x="10" y="9" width="2" height="1" fill="#000"/><rect x="12" y="9" width="1" height="1" fill="#808000"/><rect x="13" y="9" width="1" height="1" fill="#a0a0a0"/><rect x="14" y="9" width="1" height="1" fill="#808000"/><rect x="15" y="9" width="1" height="1" fill="#000"/><rect x="5" y="10" width="1" height="1" fill="#000"/><rect x="6" y="10" width="2" height="1" fill="#ffff00"/><rect x="8" y="10" width="1" height="1" fill="#000"/><rect x="9" y="10" width="1" height="1" fill="#fff"/><rect x="10" y="10" width="1" height="1" fill="#808000"/><rect x="11" y="10" width="1" height="1" fill="#a0a0a0"/><rect x="12" y="10" width="1" height="1" fill="#808000"/><rect x="13" y="10" width="1" height="1" fill="#a0a0a0"/><rect x="14" y="10" width="1" height="1" fill="#808000"/><rect x="15" y="10" width="1" height="1" fill="#000"/><rect x="5" y="11" width="1" height="1" fill="#000"/><rect x="6" y="11" width="2" height="1" fill="#ffff00"/><rect x="8" y="11" width="1" height="1" fill="#000"/><rect x="9" y="11" width="1" height="1" fill="#fff"/><rect x="10" y="11" width="1" height="1" fill="#a0a0a0"/><rect x="11" y="11" width="1" height="1" fill="#808000"/><rect x="12" y="11" width="1" height="1" fill="#a0a0a0"/><rect x="13" y="11" width="1" height="1" fill="#808000"/><rect x="14" y="11" width="1" height="1" fill="#a0a0a0"/><rect x="15" y="11" width="1" height="1" fill="#000"/><rect x="0" y="12" width="6" height="1" fill="#000"/><rect x="6" y="12" width="1" height="1" fill="#ffff00"/><rect x="7" y="12" width="2" height="1" fill="#000"/><rect x="9" y="12" width="1" height="1" fill="#fff"/><rect x="10" y="12" width="1" height="1" fill="#808000"/><rect x="11" y="12" width="1" height="1" fill="#a0a0a0"/><rect x="12" y="12" width="1" height="1" fill="#808000"/><rect x="13" y="12" width="1" height="1" fill="#a0a0a0"/><rect x="14" y="12" width="1" height="1" fill="#808000"/><rect x="15" y="12" width="1" height="1" fill="#000"/><rect x="0" y="13" width="1" height="1" fill="#808000"/><rect x="2" y="13" width="1" height="1" fill="#808000"/><rect x="4" y="13" width="1" height="1" fill="#808000"/><rect x="6" y="13" width="2" height="1" fill="#000"/><rect x="8" y="13" width="1" height="1" fill="#fff"/><rect x="9" y="13" width="1" height="1" fill="#a0a0a0"/><rect x="10" y="13" width="1" height="1" fill="#808000"/><rect x="11" y="13" width="1" height="1" fill="#a0a0a0"/><rect x="12" y="13" width="1" height="1" fill="#808000"/><rect x="13" y="13" width="1" height="1" fill="#a0a0a0"/><rect x="14" y="13" width="1" height="1" fill="#000"/><rect x="15" y="13" width="1" height="1" fill="#808000"/><rect x="1" y="14" width="1" height="1" fill="#808000"/><rect x="3" y="14" width="1" height="1" fill="#808000"/><rect x="5" y="14" width="1" height="1" fill="#808000"/><rect x="7" y="14" width="1" height="1" fill="#000"/><rect x="8" y="14" width="1" height="1" fill="#fff"/><rect x="9" y="14" width="1" height="1" fill="#808000"/><rect x="10" y="14" width="1" height="1" fill="#a0a0a0"/><rect x="11" y="14" width="1" height="1" fill="#808000"/><rect x="12" y="14" width="2" height="1" fill="#000"/><rect x="15" y="14" width="1" height="1" fill="#808000"/><rect x="0" y="15" width="1" height="1" fill="#808000"/><rect x="2" y="15" width="1" height="1" fill="#808000"/><rect x="4" y="15" width="1" height="1" fill="#808000"/><rect x="6" y="15" width="1" height="1" fill="#808000"/><rect x="8" y="15" width="4" height="1" fill="#000"/><rect x="13" y="15" width="1" height="1" fill="#808000"/><rect x="15" y="15" width="1" height="1" fill="#808000"/></svg>
<div class="t" style="left:822px;top:508px;color:#000;letter-spacing:-0.5px;">Sair</div>
</body></html>
